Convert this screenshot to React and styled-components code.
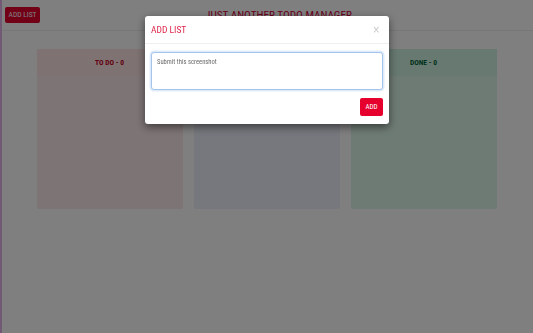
import React from "react";
import styled, { createGlobalStyle } from "styled-components";

const Global = createGlobalStyle`
  html, body { margin: 0; padding: 0; }
  body {
    background: #ffffff;
    font-family: "Roboto Condensed", "Roboto", "Liberation Sans", sans-serif;
    font-stretch: condensed;
    border-left: 2px solid #e4b4ec;
    min-height: 333px;
    box-sizing: border-box;
    overflow: hidden;
  }
`;

const Page = styled.div`
  width: 531px;
  height: 333px;
  display: flex;
  flex-direction: column;
`;

const Header = styled.header`
  height: 31px;
  box-sizing: border-box;
  border-bottom: 1px solid #eeeeee;
  display: flex;
  align-items: center;
  padding: 0 16px 0 3px;
`;

const RedButton = styled.button`
  background: #e5002e;
  color: #ffffff;
  border: none;
  border-radius: 2px;
  font-family: inherit;
  font-stretch: condensed;
  font-weight: 400;
  font-size: ${(p) => p.$size || 8}px;
  height: ${(p) => p.$h || 16}px;
  width: ${(p) => p.$w}px;
  padding: 0;
  cursor: pointer;
  line-height: 1;
`;

const Title = styled.h1`
  flex: 1;
  margin: 0;
  text-align: center;
  font-size: 11.2px;
  font-weight: 400;
  color: #d4003a;
`;

const Board = styled.main`
  display: grid;
  grid-template-columns: repeat(3, 146px);
  column-gap: 11px;
  justify-content: center;
  padding-top: 18px;
  padding-right: 2px;
`;

const Column = styled.section`
  height: 160px;
  border-radius: 2px;
  background: ${(p) => p.$body};
  display: flex;
  flex-direction: column;
`;

const ColumnHead = styled.div`
  height: 27px;
  background: ${(p) => p.$head};
  display: flex;
  align-items: center;
  justify-content: center;
  font-size: 7.5px;
  font-weight: 700;
  color: ${(p) => p.$color};
`;

const Backdrop = styled.div`
  position: fixed;
  inset: 0;
  background: rgba(0, 0, 0, 0.5);
`;

const Modal = styled.div`
  position: fixed;
  top: 16px;
  left: 145px;
  width: 244px;
  background: #ffffff;
  border-radius: 3px;
  box-shadow: 0 3px 8px rgba(0, 0, 0, 0.5);
  display: flex;
  flex-direction: column;
`;

const ModalHeader = styled.div`
  height: 28px;
  box-sizing: border-box;
  border-bottom: 1px solid #eeeeee;
  display: flex;
  align-items: center;
  justify-content: space-between;
  padding: 0 6px;
`;

const ModalTitle = styled.h2`
  margin: 0;
  font-size: 9.5px;
  font-weight: 400;
  color: #e0284c;
`;

const Close = styled.span`
  color: #c8c8c8;
  font-family: "DejaVu Sans", sans-serif;
  font-size: 10px;
  line-height: 1;
  margin-right: 3px;
`;

const ModalBody = styled.div`
  padding: 8px 6px 0;
`;

const TextArea = styled.textarea`
  display: block;
  width: 100%;
  height: 38px;
  box-sizing: border-box;
  border: 1px solid #a4c4ec;
  border-radius: 3px;
  box-shadow: 0 0 0 1.5px rgba(150, 190, 240, 0.3);
  padding: 5px 5px;
  font-family: inherit;
  font-stretch: condensed;
  font-size: 6.6px;
  color: #6a6a6a;
  resize: none;
  outline: none;
`;

const ModalFooter = styled.div`
  display: flex;
  justify-content: flex-end;
  padding: 8px 6px 8px;
`;

const columns = [
  { title: "TO DO - 0", head: "#ffe4e4", body: "#fbe8ea", color: "#c8001e" },
  { title: "DOING - 0", head: "#eceefc", body: "#eef0fb", color: "#2a3fa0" },
  { title: "DONE - 0", head: "#cff2e0", body: "#dcf4e8", color: "#00663a" },
];

export default function App() {
  return (
    <>
      <Global />
      <Page>
        <Header>
          <RedButton $size={7.5} $h={16} $w={35}>ADD LIST</RedButton>
          <Title>JUST ANOTHER TODO MANAGER</Title>
        </Header>
        <Board>
          {columns.map((c) => (
            <Column key={c.title} $body={c.body}>
              <ColumnHead $head={c.head} $color={c.color}>{c.title}</ColumnHead>
            </Column>
          ))}
        </Board>
      </Page>
      <Backdrop />
      <Modal>
        <ModalHeader>
          <ModalTitle>ADD LIST</ModalTitle>
          <Close>×</Close>
        </ModalHeader>
        <ModalBody>
          <TextArea defaultValue="Submit this screenshot" />
        </ModalBody>
        <ModalFooter>
          <RedButton $size={7} $h={18} $w={23}>ADD</RedButton>
        </ModalFooter>
      </Modal>
    </>
  );
}
